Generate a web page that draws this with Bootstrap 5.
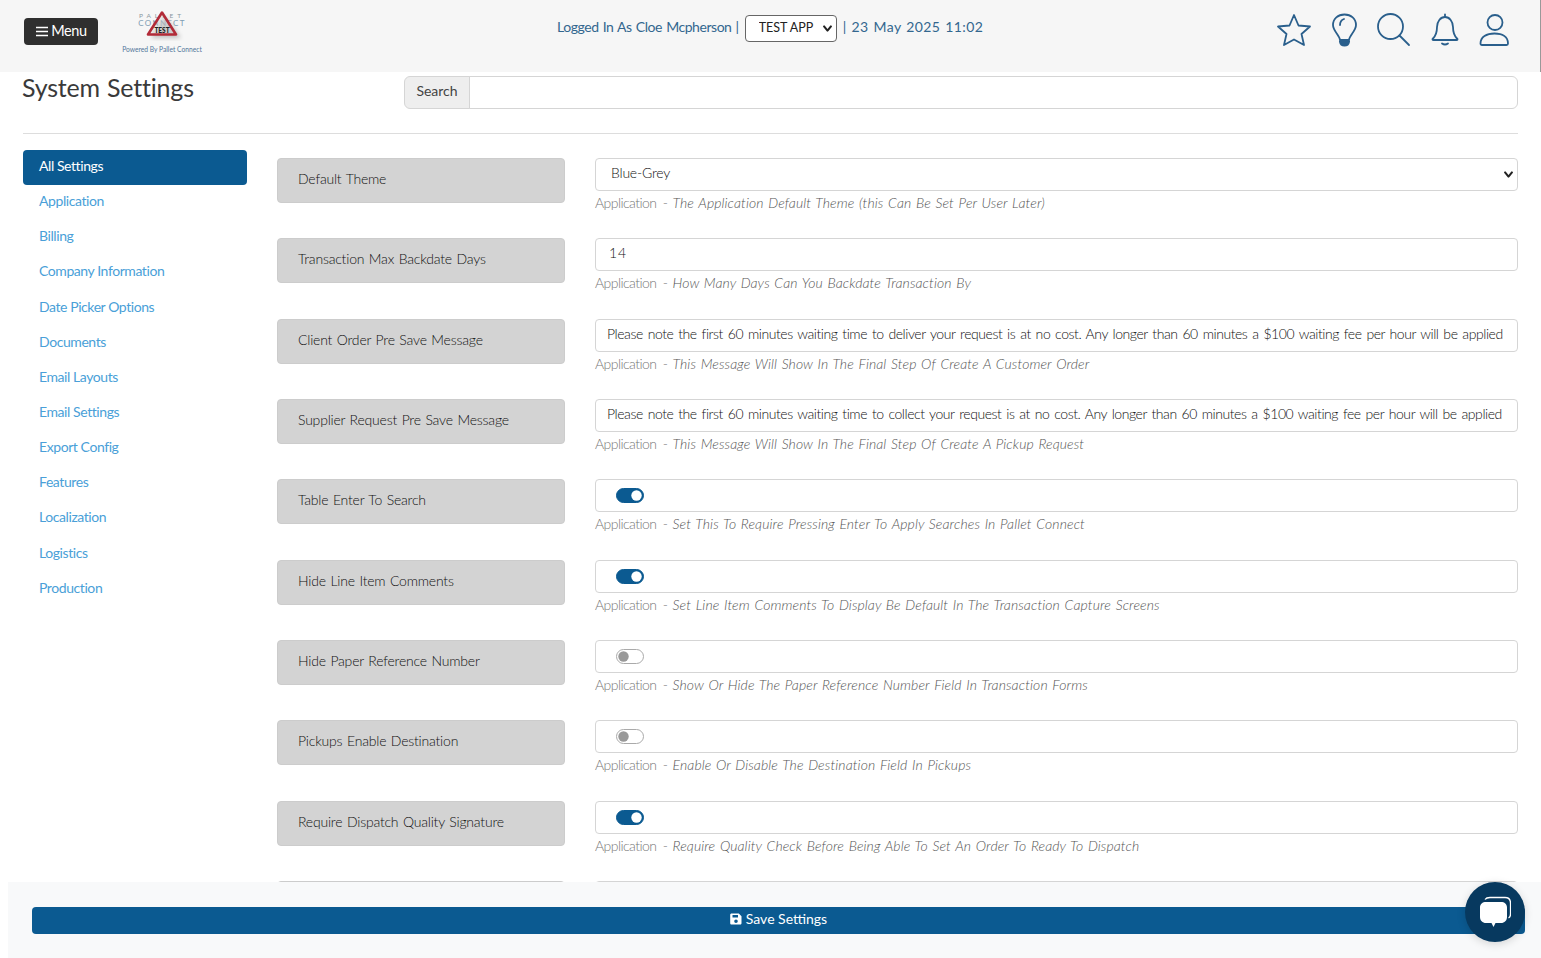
<!DOCTYPE html>
<html lang="en">
<head>
<meta charset="utf-8">
<title>System Settings</title>
<link rel="stylesheet" href="https://cdn.jsdelivr.net/npm/bootstrap@5.3.0/dist/css/bootstrap.min.css">
<style>
html,body{height:958px;overflow:hidden}
body{font-family:"Lato","Liberation Sans",sans-serif;font-size:14px;font-weight:300;color:#333;background:#fff;word-spacing:1px}
.top-bar{height:72px;background:#f6f6f6;border-right:1px solid #999;padding:18px 29px 0 24px;position:relative}
.menu-btn{width:74px;height:27px;background:#2f2f2f;color:#fff;border:0;border-radius:4px;font-size:14.5px;padding:0 0 1px 1px;letter-spacing:-.4px;display:flex;align-items:center;justify-content:center;gap:3px}
.logo-box{width:90px;margin-left:19px;margin-top:-9px;text-align:center}
.logo-box svg{display:block;margin:0 auto;font-weight:400}
.powered{font-size:6.7px;color:#54779b;white-space:nowrap;word-spacing:0;margin-top:-1px;font-weight:400}
.status-line{position:absolute;left:557px;top:15px;height:27px;color:#33678f;font-size:14px;font-weight:400}
.status-line .who{letter-spacing:-.45px;padding-bottom:5px}
.status-line .stamp{letter-spacing:.4px;padding-bottom:5px}
.app-select{width:92px;height:27px;font-size:12.5px;font-weight:400;color:#222;padding:0 20px 0 13px;border-color:#666;border-radius:4px;background-image:url("data:image/svg+xml,%3csvg xmlns='http://www.w3.org/2000/svg' viewBox='0 0 16 16'%3e%3cpath fill='none' stroke='%23222' stroke-linecap='round' stroke-linejoin='round' stroke-width='3' d='m3 5 5 6 5-6'/%3e%3c/svg%3e");background-position:right 3px center;background-size:11px 11px;margin:0 6px;word-spacing:0;box-shadow:none}
.icon-set{gap:16px;margin-top:-5px}
.page-wrap{padding:0 23px}
.page-title{font-size:25px;font-weight:400;color:#3a3a3a;margin:0 0 0 -1px;width:382px;line-height:30px;letter-spacing:-.2px}
.search-group{height:33px;margin-top:4px}
.search-group .input-group-text{font-size:14px;font-weight:400;background:#eee;color:#444;padding:0 11.5px 4px;height:33px;border-color:#d5d5d5;letter-spacing:-.05px}
.search-group .form-control{height:33px;border-color:#d5d5d5}
.rule-line{margin:24px 0 16px;border-color:#bbb;opacity:.5}
.side-col{width:224px;flex:none;margin-right:30px}
.side-link{display:flex;align-items:center;height:35.15px;padding:0 16px 4px;color:#4a9fd8;text-decoration:none;font-size:14px;font-weight:400;letter-spacing:-.42px;word-spacing:0;border-radius:4px}
.side-link.is-on{background:#0b5a91;color:#fff}
.set-col{flex:1;min-width:0;padding-top:8px}
.set-row{height:80.33px;display:flex;gap:30px}
.set-label{width:288px;height:45px;flex:none;background:#d3d3d3;border:1px solid #ccc;border-radius:4px;padding:0 20px 4px;display:flex;align-items:center;color:#111;font-size:14px;margin:0;letter-spacing:-.2px}
.set-main{flex:1;min-width:0}
.set-input{height:33px;border-color:#d5d5d5;border-radius:4px;font-size:14px;font-weight:300;color:#111;padding:0 11px 4px;word-spacing:1.5px;letter-spacing:-.44px;box-shadow:none}
select.set-input{padding-left:15px;letter-spacing:-.2px;background-image:url("data:image/svg+xml,%3csvg xmlns='http://www.w3.org/2000/svg' viewBox='0 0 16 16'%3e%3cpath fill='none' stroke='%23222' stroke-linecap='round' stroke-linejoin='round' stroke-width='3' d='m3 5 5 6 5-6'/%3e%3c/svg%3e");background-size:11px 11px;background-position:right 3px center}
.num-input{letter-spacing:1px;padding-left:13px}
.input-clip{white-space:nowrap;overflow:hidden;text-overflow:clip}
.switch-box{height:33px;border:1px solid #d5d5d5;border-radius:4px;display:flex;align-items:center;padding-left:20px}
.switch-box .form-check{margin:0;padding:0;min-height:0;display:flex}
.switch-box .form-check-input{width:28px;height:15px;margin:0;float:none;box-shadow:none;border-color:#aaa;background-image:url("data:image/svg+xml,%3csvg xmlns='http://www.w3.org/2000/svg' viewBox='-4 -4 8 8'%3e%3ccircle r='3.2' fill='%23999'/%3e%3c/svg%3e")}
.switch-box .form-check-input:checked{background-color:#0b5a91;border-color:#0b5a91;background-image:url("data:image/svg+xml,%3csvg xmlns='http://www.w3.org/2000/svg' viewBox='-4 -4 8 8'%3e%3ccircle r='3.2' fill='%23fff'/%3e%3c/svg%3e")}
.help-line{color:#777;font-size:14px;margin-top:2px;line-height:20px;white-space:nowrap;letter-spacing:-.55px;word-spacing:3px}
.help-line em{color:#555;margin-left:-1px;letter-spacing:.1px;word-spacing:1px}
.save-bar{position:fixed;left:8px;right:0;bottom:0;height:76px;background:#f8f9fa;padding:25px 16px 0 24px}
.save-btn{height:27px;width:100%;background:#0b5a91;color:#fff;border:0;border-radius:4px;padding:0 0 4px;font-size:14px;font-weight:400;display:flex;align-items:center;justify-content:center;gap:4px}
.chat-orb{position:fixed;left:1465px;top:882px;width:60px;height:60px;border-radius:50%;background:#07395f;display:flex;align-items:center;justify-content:center;box-shadow:0 2px 8px rgba(0,0,0,.15)}
</style>
</head>
<body>
<header class="top-bar d-flex justify-content-between align-items-start">
  <div class="d-flex align-items-start">
    <button class="menu-btn" type="button">
      <svg width="12" height="11" viewBox="0 0 12 11"><path d="M0 1.5h12M0 5.5h12M0 9.5h12" stroke="#fff" stroke-width="1.4"/></svg>
      <span>Menu</span>
    </button>
    <div class="logo-box">
      <svg width="70" height="36" viewBox="0 0 70 36">
        <defs><filter id="soft"><feGaussianBlur stdDeviation="2"/></filter></defs>
        <text x="35" y="8.500" text-anchor="middle" font-size="6.500" letter-spacing="4" fill="#8a969f">PALLET</text>
        <text x="35" y="17" text-anchor="middle" font-size="8" letter-spacing="1.300" fill="#7e9db3">CONNECT</text>
        <path d="M38 7 L54 29 L24 29 Z" fill="#8d8d8d" opacity=".5" filter="url(#soft)"/>
        <path d="M35 3.500 L49 25.500 L21 25.500 Z" fill="#ddd" fill-opacity=".4" stroke="#b22b38" stroke-width="2.600" stroke-linejoin="round"/>
        <text x="35" y="24" text-anchor="middle" font-size="6.500" font-weight="900" fill="#222">TEST</text>
      </svg>
      <div class="powered">Powered By Pallet Connect</div>
    </div>
  </div>
  <div class="status-line d-flex align-items-center">
    <span class="who">Logged In As Cloe Mcpherson |</span>
    <select class="form-select app-select"><option>TEST APP</option></select>
    <span class="stamp">| 23 May 2025 11:02</span>
  </div>
  <div class="d-flex icon-set align-items-center">
    <svg width="34" height="34" viewBox="0 0 34 34" fill="none" stroke="#2a5f8c" stroke-width="1.800" stroke-linejoin="round"><path d="M17 2l4.500 10.500 11.500 1-8.500 7.500 2.500 11-10-5.500-10 5.500 2.500-11L1 13.500l11.500-1z"/></svg>
    <svg width="34" height="34" viewBox="0 0 34 34" fill="none" stroke="#2a5f8c" stroke-width="1.800" stroke-linecap="round"><path d="M13 27C12.500 22 6 18 6 12 6 5.500 11 1.500 17.500 1.500S29 5.500 29 12c0 6-6.500 10-7 15z"/><path d="M13 12c0-3 1.500-5 4-6"/><path d="M13 29h9c-.4 2.500-2.500 3.500-4.500 3.500S13.400 31.500 13 29z" fill="#2a5f8c"/></svg>
    <svg width="34" height="34" viewBox="0 0 34 34" fill="none" stroke="#2a5f8c" stroke-width="1.800" stroke-linecap="round"><circle cx="13.500" cy="13.500" r="12.500"/><path d="M22.500 22.500l9.500 9.500"/></svg>
    <svg width="34" height="34" viewBox="0 0 34 34" fill="none" stroke="#2a5f8c" stroke-width="1.800" stroke-linecap="round" stroke-linejoin="round"><path d="M18 1.500v2.500"/><path d="M6 25.500c3-3 4-7 4-11.500C10 8.500 13.500 4 18 4s8 4.500 8 10c0 4.500 1 8.500 4 11.500 1 1 .5 1.500-.5 1.500h-23c-1 0-1.500-.5-.5-1.500z"/><path d="M15 30.500c1.800 1.200 4.200 1.200 6 0"/></svg>
    <svg width="34" height="34" viewBox="0 0 34 34" fill="none" stroke="#2a5f8c" stroke-width="1.800"><circle cx="18" cy="9.500" r="7.500"/><path d="M3.500 30.500C3.500 24 9.500 20.500 17.500 20.500S31 24 31 30.500c0 1-.5 1.500-1.500 1.500H5c-1 0-1.500-.5-1.500-1.500z"/></svg>
  </div>
</header>

<main class="page-wrap">
  <div class="d-flex">
    <h1 class="page-title">System Settings</h1>
    <div class="input-group search-group flex-fill w-auto">
      <span class="input-group-text">Search</span>
      <input class="form-control" type="text" aria-label="Search">
    </div>
  </div>
  <hr class="rule-line">
  <div class="d-flex">
    <nav class="side-col">
      <a class="side-link is-on" href="#">All Settings</a>
      <a class="side-link" href="#">Application</a>
      <a class="side-link" href="#">Billing</a>
      <a class="side-link" href="#">Company Information</a>
      <a class="side-link" href="#">Date Picker Options</a>
      <a class="side-link" href="#">Documents</a>
      <a class="side-link" href="#">Email Layouts</a>
      <a class="side-link" href="#">Email Settings</a>
      <a class="side-link" href="#">Export Config</a>
      <a class="side-link" href="#">Features</a>
      <a class="side-link" href="#">Localization</a>
      <a class="side-link" href="#">Logistics</a>
      <a class="side-link" href="#">Production</a>
    </nav>
    <section class="set-col">
      <div class="set-row">
        <label class="set-label">Default Theme</label>
        <div class="set-main">
          <select class="form-select set-input"><option>Blue-Grey</option></select>
          <div class="help-line">Application - <em>The Application Default Theme (this Can Be Set Per User Later)</em></div>
        </div>
      </div>
      <div class="set-row">
        <label class="set-label">Transaction Max Backdate Days</label>
        <div class="set-main">
          <input class="form-control set-input num-input" value="14">
          <div class="help-line">Application - <em>How Many Days Can You Backdate Transaction By</em></div>
        </div>
      </div>
      <div class="set-row">
        <label class="set-label">Client Order Pre Save Message</label>
        <div class="set-main">
          <input class="form-control set-input input-clip" value="Please note the first 60 minutes waiting time to deliver your request is at no cost. Any longer than 60 minutes a $100 waiting fee per hour will be applied">
          <div class="help-line">Application - <em>This Message Will Show In The Final Step Of Create A Customer Order</em></div>
        </div>
      </div>
      <div class="set-row">
        <label class="set-label">Supplier Request Pre Save Message</label>
        <div class="set-main">
          <input class="form-control set-input input-clip" value="Please note the first 60 minutes waiting time to collect your request is at no cost. Any longer than 60 minutes a $100 waiting fee per hour will be applied">
          <div class="help-line">Application - <em>This Message Will Show In The Final Step Of Create A Pickup Request</em></div>
        </div>
      </div>
      <div class="set-row">
        <label class="set-label">Table Enter To Search</label>
        <div class="set-main">
          <div class="switch-box"><div class="form-check form-switch"><input class="form-check-input" type="checkbox" checked></div></div>
          <div class="help-line">Application - <em>Set This To Require Pressing Enter To Apply Searches In Pallet Connect</em></div>
        </div>
      </div>
      <div class="set-row">
        <label class="set-label">Hide Line Item Comments</label>
        <div class="set-main">
          <div class="switch-box"><div class="form-check form-switch"><input class="form-check-input" type="checkbox" checked></div></div>
          <div class="help-line">Application - <em>Set Line Item Comments To Display Be Default In The Transaction Capture Screens</em></div>
        </div>
      </div>
      <div class="set-row">
        <label class="set-label">Hide Paper Reference Number</label>
        <div class="set-main">
          <div class="switch-box"><div class="form-check form-switch"><input class="form-check-input" type="checkbox"></div></div>
          <div class="help-line">Application - <em>Show Or Hide The Paper Reference Number Field In Transaction Forms</em></div>
        </div>
      </div>
      <div class="set-row">
        <label class="set-label">Pickups Enable Destination</label>
        <div class="set-main">
          <div class="switch-box"><div class="form-check form-switch"><input class="form-check-input" type="checkbox"></div></div>
          <div class="help-line">Application - <em>Enable Or Disable The Destination Field In Pickups</em></div>
        </div>
      </div>
      <div class="set-row">
        <label class="set-label">Require Dispatch Quality Signature</label>
        <div class="set-main">
          <div class="switch-box"><div class="form-check form-switch"><input class="form-check-input" type="checkbox" checked></div></div>
          <div class="help-line">Application - <em>Require Quality Check Before Being Able To Set An Order To Ready To Dispatch</em></div>
        </div>
      </div>
      <div class="set-row">
        <label class="set-label"></label>
        <div class="set-main"><div class="switch-box"></div></div>
      </div>
    </section>
  </div>
</main>

<footer class="save-bar">
  <button class="save-btn" type="button">
    <svg width="12" height="12" viewBox="0 0 12 12"><path fill="#fff" fill-rule="evenodd" d="M1.500 0.500h7.300L11.500 3.200v7c0 .7-.6 1.300-1.300 1.300H1.500C.8 11.500.2 10.900.2 10.200V1.800C.2 1.100.8.500 1.500.500zM2.500 2v2.500h5.500V2zM6 6.500a1.800 1.800 0 1 0 0 3.600 1.800 1.800 0 0 0 0-3.600z"/></svg>
    <span>Save Settings</span>
  </button>
</footer>
<div class="chat-orb">
  <svg width="32" height="32" viewBox="0 0 32 32"><path d="M6 3.500C7 2 9 1.500 11 1.500h15c3.500 0 5.500 2 5.500 5.500v11c0 2-.7 3.500-2 4" fill="none" stroke="#fff" stroke-width="1.300"/><path d="M7 6h15c3.500 0 6 2 6 5.500V21c0 3.500-2.500 6-6 6h-5.500l-2 4-2-4H7c-3.500 0-6-2.500-6-6v-9.500C1 8 3.500 6 7 6z" fill="#fff"/></svg>
</div>
<script src="https://cdn.jsdelivr.net/npm/bootstrap@5.3.0/dist/js/bootstrap.bundle.min.js"></script>
</body>
</html>
